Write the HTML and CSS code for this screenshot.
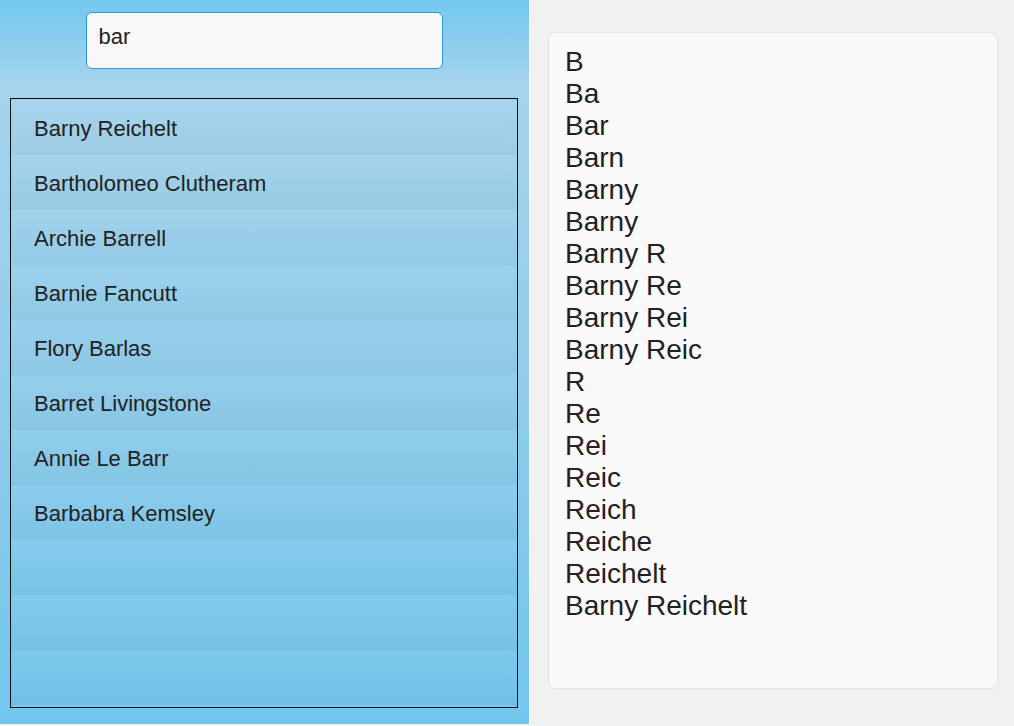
FILE: index.html
```html
<!DOCTYPE html>
<html lang="en">
<head>
    <meta charset="UTF-8">
    <meta name="viewport" content="width=device-width, initial-scale=1.0">
    <title>Name Search</title>
    <link rel="stylesheet" href="styles.css">
</head>
<body>
    <!-- Search side -->
    <div class="search-panel">
        <div class="search-box">
            <input type="text" class="search-input" value="bar">
        </div>
        <ul class="results">
            <li>Barny Reichelt</li>
            <li>Bartholomeo Clutheram</li>
            <li>Archie Barrell</li>
            <li>Barnie Fancutt</li>
            <li>Flory Barlas</li>
            <li>Barret Livingstone</li>
            <li>Annie Le Barr</li>
            <li>Barbabra Kemsley</li>
        </ul>
    </div>

    <!-- Typing log -->
    <div class="log-panel">
        <div class="log">
            <div>B</div>
            <div>Ba</div>
            <div>Bar</div>
            <div>Barn</div>
            <div>Barny</div>
            <div>Barny</div>
            <div>Barny R</div>
            <div>Barny Re</div>
            <div>Barny Rei</div>
            <div>Barny Reic</div>
            <div>R</div>
            <div>Re</div>
            <div>Rei</div>
            <div>Reic</div>
            <div>Reich</div>
            <div>Reiche</div>
            <div>Reichelt</div>
            <div>Barny Reichelt</div>
        </div>
    </div>
</body>
</html>
```

FILE: styles.css
```css
body {
    font-family: "Liberation Sans", Arial, sans-serif;
    margin: 0;
    padding: 0;
    display: flex;
    height: 726px;
    overflow: hidden;
    background-color: #f1f1f1;
    color: #222;
}

/* Search side */
.search-panel {
    width: 529px;
    height: 724px;
    flex-shrink: 0;
    box-sizing: border-box;
    padding: 12px 11px 0 10px;
    background: linear-gradient(to bottom, #72c8f0 0, #a6d4ec 85px, #8fcdeb 400px, #72c6ee 100%);
    display: flex;
    flex-direction: column;
}

.search-box {
    display: flex;
    justify-content: center;
}

.search-input {
    width: 357px;
    height: 57px;
    box-sizing: border-box;
    padding: 0 12px 8px;
    border: 1px solid #2b9ad6;
    border-radius: 6px;
    background-color: #f8f8f8;
    font-family: inherit;
    font-size: 22px;
    color: #222;
    outline: none;
}

.results {
    list-style: none;
    margin: 29px 0 0 0;
    padding: 2px 0 0 0;
    height: 610px;
    box-sizing: border-box;
    border: 1px solid #111;
    background: repeating-linear-gradient(to bottom,
        rgba(255, 255, 255, 0.03) 1px,
        rgba(0, 0, 0, 0.03) 56px);
}

.results li {
    height: 55px;
    line-height: 55px;
    padding-left: 23px;
    font-size: 22px;
    color: #222;
}

/* Typing log */
.log-panel {
    flex: 1;
    border-left: 1px solid #fafafa;
    padding: 32px 16px 37px 18px;
}

.log {
    height: 100%;
    box-sizing: border-box;
    padding: 13px 16px;
    background-color: #f9f9f9;
    border: 1px solid #e4e4e4;
    border-radius: 7px;
    font-size: 28px;
    line-height: 32px;
    color: #222;
}
```
